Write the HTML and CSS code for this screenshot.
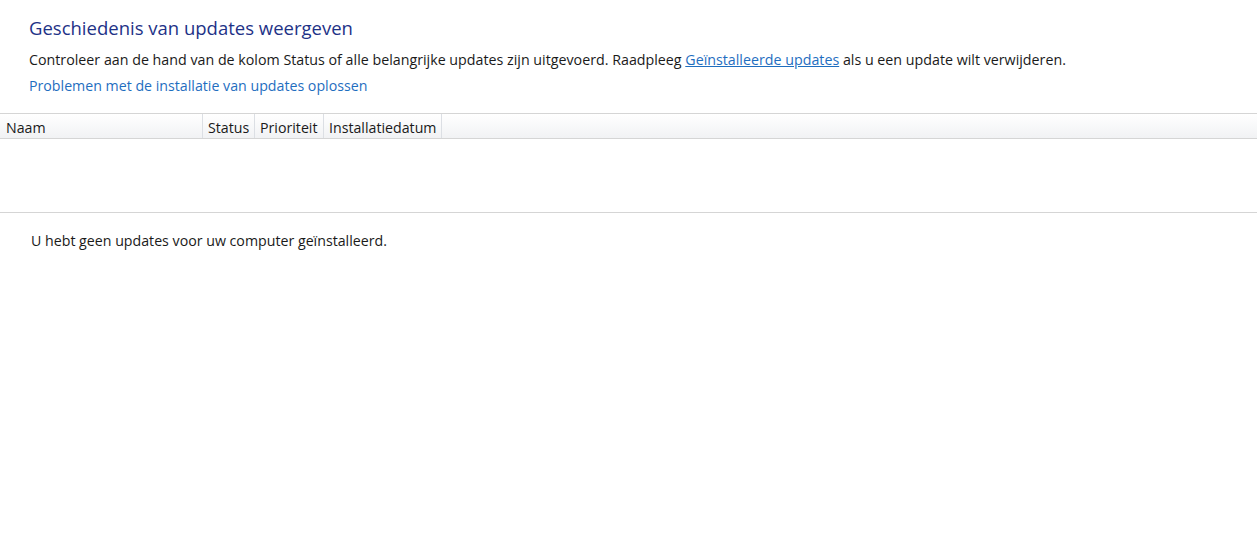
FILE: index.html
```html
<!DOCTYPE html>
<html lang="nl">
<head>
<meta charset="utf-8">
<title>Geschiedenis van updates weergeven</title>
<link rel="stylesheet" href="styles.css">
</head>
<body>
<div class="intro">
  <h1 class="title">Geschiedenis van updates weergeven</h1>
  <p class="desc">Controleer aan de hand van de kolom Status of alle belangrijke updates zijn uitgevoerd. Raadpleeg <a class="ulink" href="#">Geïnstalleerde updates</a> als u een update wilt verwijderen.</p>
  <a class="link" href="#">Problemen met de installatie van updates oplossen</a>
</div>
<div class="list">
  <div class="header">
    <div class="col c-name">Naam</div>
    <div class="col c-status">Status</div>
    <div class="col c-prio">Prioriteit</div>
    <div class="col c-date">Installatiedatum</div>
    <div class="col c-rest"></div>
  </div>
  <div class="rows"></div>
</div>
<p class="empty">U hebt geen updates voor uw computer geïnstalleerd.</p>
</body>
</html>
```
FILE: styles.css
```css
html, body {
  margin: 0;
  padding: 0;
  background: #ffffff;
  font-family: "Open Sans", "Noto Sans", "Liberation Sans", sans-serif;
  color: #1a1a1a;
}
.intro {
  padding: 14px 29px 0 29px;
  height: 99px;
  box-sizing: border-box;
}
.title {
  margin: 0;
  font-size: 18.5px;
  font-weight: 400;
  color: #1e3287;
  line-height: 28px;
}
.desc {
  margin: 6px 0 0 0;
  font-size: 14.25px;
  line-height: 24px;
}
.ulink {
  color: #1f6ebf;
  text-decoration: underline;
}
.link {
  display: block;
  font-size: 14.2px;
  line-height: 24px;
  margin-top: 2px;
  color: #1f6ebf;
  text-decoration: none;
}
.list {
  border-top: 1px solid #d5d5d5;
  margin-top: 14px;
}
.header {
  display: flex;
  height: 25px;
  box-sizing: border-box;
  background: linear-gradient(#ffffff, #f1f2f4);
  border-bottom: 1px solid #d5d5d5;
  font-size: 14.2px;
  line-height: 27px;
}
.col {
  border-right: 1px solid #dcdfe4;
  padding: 0 5px;
  box-sizing: border-box;
  white-space: nowrap;
  overflow: hidden;
}
.c-name { width: 203px; padding-left: 6px; }
.c-status { width: 52px; }
.c-prio { width: 69px; }
.c-date { width: 118px; }
.c-rest { flex: 1; border-right: none; }
.rows {
  height: 73px;
  border-bottom: 1px solid #d5d5d5;
}
.empty {
  margin: 16px 0 0 31px;
  font-size: 14.2px;
  line-height: 24px;
}
```
